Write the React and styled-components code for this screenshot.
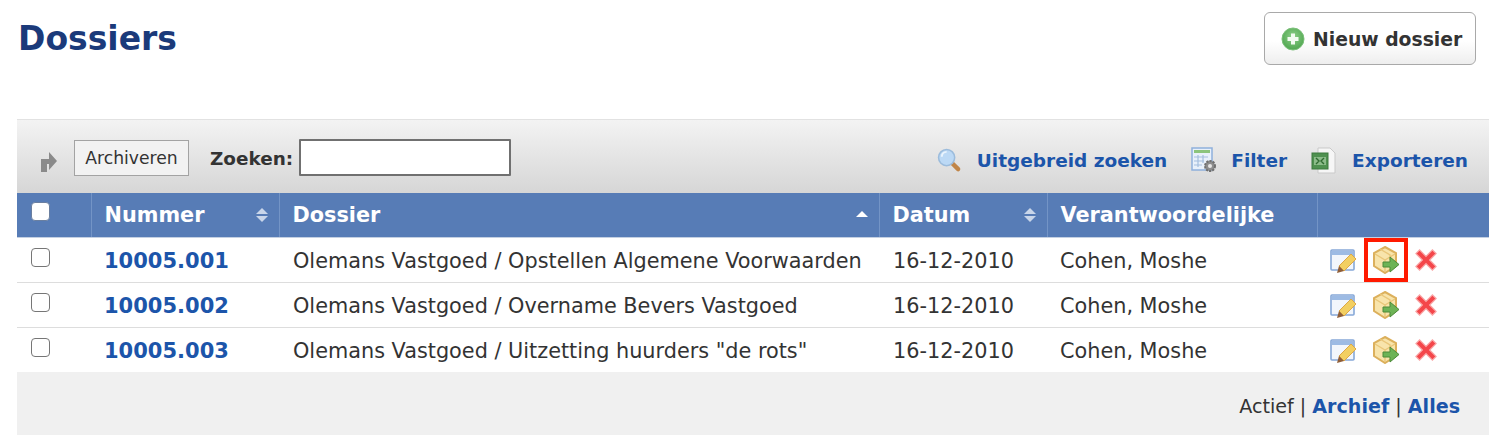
import React from "react";
import styled, { createGlobalStyle } from "styled-components";

const GlobalStyle = createGlobalStyle`
	html, body {
		margin: 0;
		padding: 0;
		background: #ffffff;
	}
	body {
		font-family: "DejaVu Sans", Verdana, sans-serif;
		color: #333333;
	}
`;

const Page = styled.div`
	width: 1502px;
	height: 436px;
	overflow: hidden;
	padding: 0 13px 0 17px;
	box-sizing: border-box;
`;

const TitleRow = styled.div`
	display: flex;
	justify-content: space-between;
	align-items: flex-start;
	height: 119px;
`;

const Title = styled.h1`
	margin: 17px 0 0 1px;
	font-size: 33px;
	line-height: 44px;
	font-weight: 700;
	color: #1b3a7a;
`;

const NewButton = styled.button`
	display: flex;
	align-items: center;
	gap: 8px;
	width: 212px;
	height: 53px;
	margin: 12px 13px 0 0;
	padding: 1px 0 0 16px;
	box-sizing: border-box;
	border: 1px solid #a9a9a9;
	border-radius: 6px;
	background: linear-gradient(#ffffff 55%, #eeeeee);
	font: 700 18.8px "DejaVu Sans", sans-serif;
	color: #333333;
`;

const Toolbar = styled.div`
	display: flex;
	align-items: center;
	justify-content: space-between;
	height: 74px;
	box-sizing: border-box;
	padding: 4px 21px 0 22px;
	border-top: 1px solid #e2e2e2;
	background: linear-gradient(#f3f3f3, #d6d6d6);
`;

const ToolGroup = styled.div`
	display: flex;
	align-items: center;
`;

const ArrowWrap = styled.span`
	display: flex;
	margin: 6px 0 0 1px;
`;

const ArchiveButton = styled.button`
	height: 36px;
	width: 115px;
	margin: 0 21px 2px 16px;
	padding: 0;
	border: 1px solid #a3a3a3;
	background: #f2f2f2;
	font: 17.2px "DejaVu Sans", sans-serif;
	color: #333333;
`;

const SearchLabel = styled.label`
	font-size: 18.4px;
	font-weight: 700;
	color: #333333;
	margin-right: 6px;
`;

const SearchInput = styled.input`
	width: 212px;
	height: 37px;
	margin: 0 0 2px 0;
	box-sizing: border-box;
	border: 2px solid #707070;
	border-radius: 1px;
	background: #ffffff;
`;

const ToolLink = styled.a`
	display: flex;
	align-items: center;
	gap: ${({ $gap }) => $gap}px;
	margin-left: ${({ $left }) => $left}px;
	padding-top: 3px;
	font-size: 18.5px;
	font-weight: 700;
	color: #1c55aa;
`;

const Table = styled.table`
	width: 1472px;
	border-collapse: collapse;
	table-layout: fixed;
`;

const HeadCell = styled.th`
	position: relative;
	height: 44px;
	padding: 0 0 0 13px;
	box-sizing: border-box;
	background: #577cb6;
	border-left: 1px solid #7394c6;
	border-bottom: 1px solid #c4d0e2;
	text-align: left;
	font-size: 20.8px;
	font-weight: 700;
	color: #ffffff;
	&:first-child {
		border-left: 0;
	}
`;

const SortMark = styled.span`
	position: absolute;
	right: ${({ $right }) => $right || 11}px;
	top: ${({ $up }) => ($up ? 18 : 15)}px;
	display: flex;
	flex-direction: column;
	gap: 2px;
	&::before,
	&::after {
		content: "";
		width: 0;
		height: 0;
		border-left: 6px solid transparent;
		border-right: 6px solid transparent;
	}
	&::before {
		border-bottom: 6px solid ${({ $up }) => ($up ? "#ffffff" : "#c9d6ea")};
	}
	&::after {
		border-top: 6px solid ${({ $up }) => ($up ? "#577cb6" : "#c9d6ea")};
	}
`;

const Row = styled.tr`
	height: 45px;
	border-bottom: 1px solid #dddddd;
	&:last-child {
		border-bottom: 0;
	}
`;

const Cell = styled.td`
	padding: 2px 0 0 13px;
	font-size: 20.8px;
	color: #333333;
	white-space: nowrap;
`;

const TitleCell = styled(Cell)`
	padding-left: 14px;
`;

const ActionCell = styled.td`
	padding: 0 0 0 13px;
`;

const CheckCell = styled.td`
	padding: 0 0 5px 14px;
`;

const CheckHead = styled(HeadCell)`
	padding: 0 0 7px 14px;
`;

const Box = styled.span`
	display: block;
	width: 19px;
	height: 19px;
	box-sizing: border-box;
	border-radius: 4px;
	border: 1px solid ${({ $head }) => ($head ? "#6a7fa0" : "#767676")};
	background: #ffffff;
`;

const NumberLink = styled.a`
	font-size: 21px;
	font-weight: 700;
	color: #1c55aa;
`;

const Actions = styled.div`
	display: flex;
	align-items: center;
	gap: 15px;
	margin-left: -1px;
`;

const MoveFrame = styled.span`
	display: flex;
	align-items: center;
	justify-content: center;
	width: ${({ $active }) => ($active ? "44px" : "28px")};
	height: ${({ $active }) => ($active ? "44px" : "28px")};
	margin: ${({ $active }) => ($active ? "-8px" : "0")};
	box-sizing: border-box;
	border: ${({ $active }) => ($active ? "4px solid #ff1a00" : "0")};
`;

const Footer = styled.div`
	height: 63px;
	box-sizing: border-box;
	padding: 23px 29px 0 0;
	background: #f0f0f0;
	text-align: right;
	font-size: 19.1px;
	color: #333333;
`;

const FooterLink = styled.a`
	font-weight: 700;
	color: #1c55aa;
`;

const PlusIcon = () => (
	<svg width="24" height="24" viewBox="0 0 24 24">
		<defs>
			<radialGradient id="plusFill" cx="50%" cy="40%" r="60%">
				<stop offset="0" stopColor="#8fd08a" />
				<stop offset="1" stopColor="#4fa64f" />
			</radialGradient>
		</defs>
		<circle cx="12" cy="12" r="11" fill="url(#plusFill)" stroke="#7cc07a" />
		<path d="M10 6.5h4V10h3.5v4H14v3.5h-4V14H6.5v-4H10z" fill="#f2fbf0" />
	</svg>
);

const ArrowIcon = () => (
	<svg width="18" height="21" viewBox="0 0 18 21">
		<path d="M1 21V8h8V1l8 9-8 9v-6H7v8z" fill="#8a8a8a" />
	</svg>
);

const SearchIcon = () => (
	<svg width="25" height="25" viewBox="0 0 26 26">
		<path d="M15 15l7 7" stroke="#c08548" strokeWidth="4.5" strokeLinecap="round" />
		<circle cx="10" cy="10" r="8.4" fill="#bcd9f5" stroke="#9cbcdc" strokeWidth="1.6" />
		<path d="M5 9a5 5 0 0 1 5-5" stroke="#eaf4fd" strokeWidth="2" fill="none" />
	</svg>
);

const FilterIcon = () => (
	<svg width="26" height="26" viewBox="0 0 26 26">
		<rect x="1" y="1" width="20" height="22" fill="#e8f0fa" stroke="#8fb0dc" strokeWidth="1.5" />
		<rect x="3" y="3" width="16" height="3" fill="#8cc47c" />
		<path d="M3 10h14M3 14h10M3 18h8M7 8v12M12 8v8" stroke="#a3bede" strokeWidth="1.2" />
		<circle cx="19" cy="19" r="5" fill="#8d8d8d" stroke="#6f6f6f" strokeWidth="2" strokeDasharray="2.2 1" />
		<circle cx="19" cy="19" r="2" fill="#e6e6e6" />
	</svg>
);

const ExcelIcon = () => (
	<svg width="26" height="27" viewBox="0 0 26 27">
		<path d="M7 1h12l5 5v20H7z" fill="#f6f6f6" stroke="#c9c9c9" />
		<rect x="1" y="6" width="16" height="16" fill="#4f9150" stroke="#3d7a3e" />
		<rect x="3" y="10" width="12" height="8" fill="#8cbc8a" />
		<path d="M5 11l3 3-3 3M13 11l-3 3 3 3" stroke="#2f6b31" strokeWidth="1.4" fill="none" />
	</svg>
);

const EditIcon = () => (
	<svg width="28" height="26" viewBox="0 0 28 26">
		<rect x="2" y="3" width="23" height="20" rx="1" fill="#f2f6fc" stroke="#86a8d8" strokeWidth="1.6" />
		<rect x="3" y="4" width="21" height="4" fill="#9dbbe4" />
		<path d="M10 19L22 7l5 5-12 12z" fill="#f2cf62" stroke="#dca848" />
		<path d="M10 19l5 5-7 2z" fill="#8f5e38" />
	</svg>
);

const MoveIcon = () => (
	<svg width="28" height="28" viewBox="0 0 28 28">
		<path d="M13 1l11 6v13l-11 7L2 20V7z" fill="#f8e4ab" stroke="#dcb05c" strokeWidth="2" />
		<path d="M3 8l10 6 10-6M13 14v12" stroke="#e9c679" strokeWidth="1.4" fill="none" />
		<path d="M8 3l10 6v5" stroke="#e9c679" strokeWidth="1.4" fill="none" />
		<path d="M11 16h7v-5l9 7.5L18 26v-5h-7z" fill="#6db356" stroke="#4c8a38" />
	</svg>
);

const DeleteIcon = () => (
	<svg width="22" height="22" viewBox="0 0 24 24">
		<path d="M1 5l4-4 7 7 7-7 4 4-7 7 7 7-4 4-7-7-7 7-4-4 7-7z" fill="#f4464a" stroke="#f9a7a7" strokeWidth="1.4" />
	</svg>
);

const rows = [
	{ number: "10005.001", title: "Olemans Vastgoed / Opstellen Algemene Voorwaarden", active: true },
	{ number: "10005.002", title: "Olemans Vastgoed / Overname Bevers Vastgoed" },
	{ number: "10005.003", title: 'Olemans Vastgoed / Uitzetting huurders "de rots"' },
];

const App = () => {
	return (
		<Page>
			<GlobalStyle />
			<TitleRow>
				<Title>Dossiers</Title>
				<NewButton>
					<PlusIcon />
					Nieuw dossier
				</NewButton>
			</TitleRow>
			<Toolbar>
				<ToolGroup>
					<ArrowWrap>
						<ArrowIcon />
					</ArrowWrap>
					<ArchiveButton>Archiveren</ArchiveButton>
					<SearchLabel>Zoeken:</SearchLabel>
					<SearchInput />
				</ToolGroup>
				<ToolGroup>
					<ToolLink $gap={15}>
						<SearchIcon />
						Uitgebreid zoeken
					</ToolLink>
					<ToolLink $gap={14} $left={24}>
						<FilterIcon />
						Filter
					</ToolLink>
					<ToolLink $gap={15} $left={24}>
						<ExcelIcon />
						Exporteren
					</ToolLink>
				</ToolGroup>
			</Toolbar>
			<Table>
				<colgroup>
					<col style={{ width: 74 }} />
					<col style={{ width: 188 }} />
					<col style={{ width: 600 }} />
					<col style={{ width: 168 }} />
					<col style={{ width: 270 }} />
					<col style={{ width: 172 }} />
				</colgroup>
				<thead>
					<tr>
						<CheckHead>
							<Box $head />
						</CheckHead>
						<HeadCell>
							Nummer
							<SortMark />
						</HeadCell>
						<HeadCell>
							Dossier
							<SortMark $up />
						</HeadCell>
						<HeadCell>
							Datum
							<SortMark />
						</HeadCell>
						<HeadCell>Verantwoordelijke</HeadCell>
						<HeadCell />
					</tr>
				</thead>
				<tbody>
					{rows.map((row) => (
						<Row key={row.number}>
							<CheckCell>
								<Box />
							</CheckCell>
							<Cell>
								<NumberLink>{row.number}</NumberLink>
							</Cell>
							<TitleCell>{row.title}</TitleCell>
							<TitleCell>16-12-2010</TitleCell>
							<Cell>Cohen, Moshe</Cell>
							<ActionCell>
								<Actions>
									<EditIcon />
									<MoveFrame $active={row.active}>
										<MoveIcon />
									</MoveFrame>
									<DeleteIcon />
								</Actions>
							</ActionCell>
						</Row>
					))}
				</tbody>
			</Table>
			<Footer>
				Actief | <FooterLink>Archief</FooterLink> | <FooterLink>Alles</FooterLink>
			</Footer>
		</Page>
	);
};

export default App;
